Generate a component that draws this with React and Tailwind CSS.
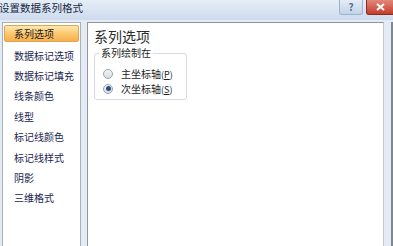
import React from 'react';

const font = { fontFamily: '"Noto Sans CJK SC", "Liberation Sans", sans-serif' };

const navItems = [
  '系列选项',
  '数据标记选项',
  '数据标记填充',
  '线条颜色',
  '线型',
  '标记线颜色',
  '标记线样式',
  '阴影',
  '三维格式',
];

const Radio = ({ checked, label, hotkey }) => (
  <div className="flex items-center h-[15px]">
    <span className="ml-[8px] w-[10px] h-[10px] rounded-full border border-[#9aa3ad] bg-gradient-to-b from-[#f4f4f4] to-[#d9dde2] flex items-center justify-center">
      {checked && <span className="w-[5px] h-[5px] rounded-full bg-[#2a4f7c]" />}
    </span>
    <span className="ml-[8px] text-[10px] leading-none text-[#1e1e1e]">
      {label}
      <span className="text-[9px]">
        (<span className="underline">{hotkey}</span>)
      </span>
    </span>
  </div>
);

export default function App() {
  return (
    <div className="w-[393px] h-[246px] overflow-hidden bg-[#e4ebf4] flex flex-col" style={font}>
      {/* Title bar */}
      <div className="h-[20px] flex items-start bg-gradient-to-b from-[#e6eef8] to-[#cddbee] shrink-0">
        <span className="text-[10.5px] leading-none text-[#1b2a44] mt-[3px] -ml-[1px]">设置数据系列格式</span>
        <div className="ml-auto flex items-start">
          <div className="w-[24px] h-[15px] mr-[3px] rounded-b-[3px] border border-t-0 border-[#9fb2cc] bg-gradient-to-b from-[#e3ecf7] to-[#c3d3e8] flex items-center justify-center text-[10px] leading-none text-[#5a7090] font-bold">
            ?
          </div>
          <div className="w-[27px] h-[15px] rounded-bl-[3px] border border-t-0 border-r-0 border-[#8a2b22] bg-gradient-to-b from-[#e1877a] to-[#c43a2c] flex items-center justify-center">
            <svg width="9" height="8" viewBox="0 0 9 8">
              <path d="M1 1 L8 7 M8 1 L1 7" stroke="#fff" strokeWidth="2" />
            </svg>
          </div>
        </div>
      </div>

      {/* Body */}
      <div className="flex flex-1 pt-[2px] min-h-0">
        {/* Left nav */}
        <div className="ml-[2px] w-[79px] bg-white border border-[#a9b1bb] border-b-0 pt-[2px] px-[1px] shrink-0">
          {navItems.map((item, i) => (
            <div
              key={item}
              className={
                i === 0
                  ? 'h-[17px] mb-[3.4px] pl-[9px] flex items-center text-[10px] leading-none text-[#1c1c1c] rounded-[2px] border border-[#e0a44f] bg-gradient-to-b from-[#fde9b0] via-[#fbc870] to-[#f8b04c]'
                  : 'h-[20.4px] pl-[10px] flex items-center text-[10px] leading-none text-[#1a2550]'
              }
            >
              {item}
            </div>
          ))}
        </div>

        {/* Right content */}
        <div className="ml-[6px] w-[297px] bg-white border border-[#8e969f] border-r-[#c3c8ce] border-b-0 shrink-0 pl-[6px] pt-[6px]">
          <div className="text-[14px] leading-none text-[#2b2b2b]">系列选项</div>
          <div className="relative mt-[10px] w-[93px] h-[47px] border border-[#d5dbe2] rounded-[3px]">
            <span className="absolute -top-[6px] left-[4px] px-[2px] bg-white text-[10px] leading-none text-[#1e1e1e]">系列绘制在</span>
            <div className="pt-[12px]">
              <Radio label="主坐标轴" hotkey="P" />
              <Radio checked label="次坐标轴" hotkey="S" />
            </div>
          </div>
        </div>

        <div className="flex-1" />
        <div className="w-[2px] bg-[#7f8790]" />
      </div>
    </div>
  );
}
